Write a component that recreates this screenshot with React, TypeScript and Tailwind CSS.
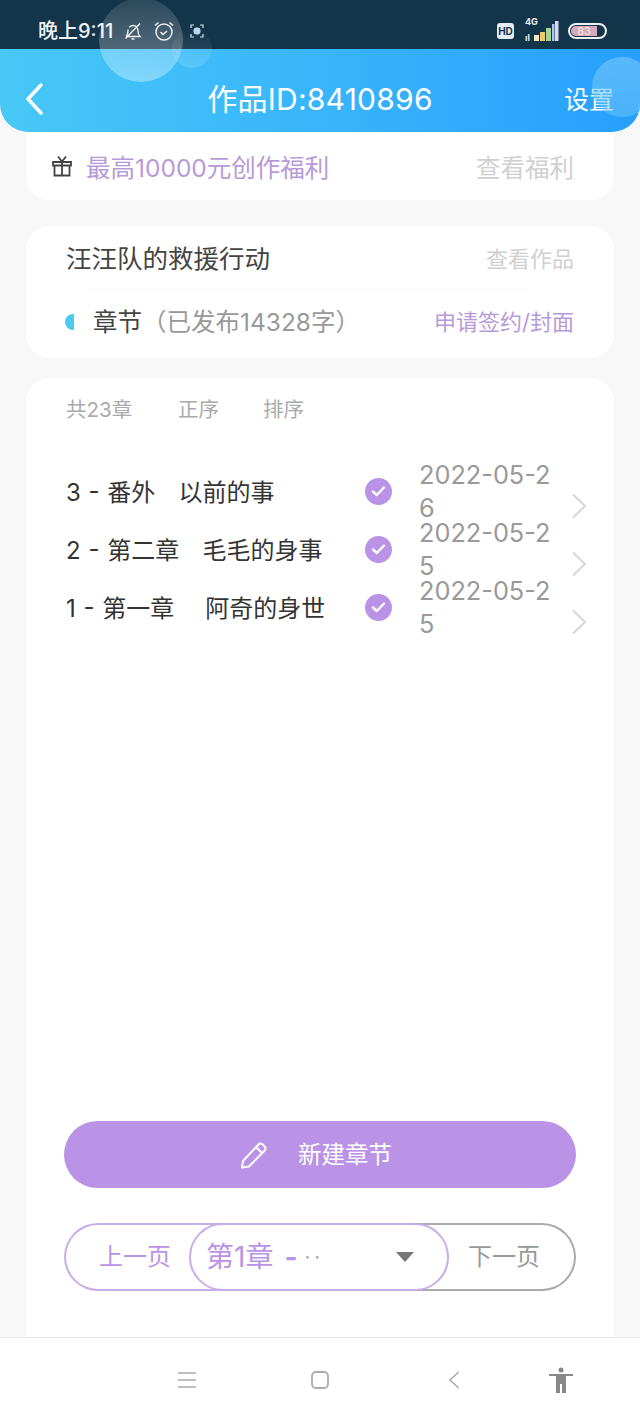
import React from 'react';

const chapters = [
  { title: '3 - 番外   以前的事', date: '2022-05-26' },
  { title: '2 - 第二章   毛毛的身事', date: '2022-05-25' },
  { title: '1 - 第一章    阿奇的身世', date: '2022-05-25' },
];

const StatusIcons = () => (
  <div className="flex items-center gap-[10px] ml-[10px]">
    <svg width="20" height="20" viewBox="0 0 20 20" fill="none" stroke="#e8eef2" strokeWidth="1.4">
      <path d="M3 15.500h14c-1.600-1.600-2-3-2-5.500 0-3-2-5.500-5-5.500-1.500 0-2.800.7-3.700 1.800M5.200 8.500C5 9 5 9.500 5 10c0 2.500-.4 3.900-2 5.500M8.500 18h3M2.500 17.500 17 2.500" />
    </svg>
    <svg width="22" height="22" viewBox="0 0 22 22" fill="none" stroke="#e8eef2" strokeWidth="1.500">
      <circle cx="11" cy="12" r="8" />
      <path d="M7.500 12l2.500 2.500 4-3.500M2 5.500 5.500 2.500M20 5.500l-3.500-3" />
    </svg>
    <svg width="14" height="14" viewBox="0 0 14 14" fill="none" className="ml-[5px]">
      <rect x="3.500" y="3.500" width="7" height="7" rx="3" fill="#b9d6ec" />
      <path d="M1 4V1h3M10 1h3v3M13 10v3h-3M4 13H1v-3" stroke="#d7e4ec" strokeWidth="1.200" />
    </svg>
  </div>
);

const SignalIcon = () => (
  <div className="relative w-[34px] h-[26px] mr-[9px] ml-[11px]">
    <span className="absolute left-0 top-[-1px] text-[9px] leading-[10px] font-bold text-[#e8eef2]">4G</span>
    <span className="absolute left-0 bottom-[1px] text-[9px] leading-[10px] font-bold text-[#e8eef2]">ıl</span>
    <svg width="34" height="20" viewBox="0 0 34 20" className="absolute left-0 top-[3px]">
      <rect x="9" y="14" width="5" height="6" fill="#f2e6c8" />
      <rect x="15" y="11" width="5" height="9" fill="#ecc96b" />
      <rect x="21" y="7" width="5" height="13" fill="#a5d596" />
      <rect x="27" y="3" width="2.500" height="17" fill="#a9c6ee" />
      <rect x="30" y="0" width="3.500" height="20" fill="#d6d9ef" />
    </svg>
  </div>
);

const App: React.FC = () => {
  return (
    <div className="relative w-[640px] h-[1422px] overflow-hidden flex flex-col bg-[#f8f8f8] font-['Inter','Noto_Sans_CJK_SC',sans-serif]">
      {/* status bar */}
      <div className="h-[49px] shrink-0 bg-[#14344a] flex items-center pt-[12px] pl-[38px] pr-[33px] text-[#eef2f5]">
        <span className="text-[20px] leading-[24px] font-medium">晚上9:11</span>
        <StatusIcons />
        <div className="ml-auto flex items-center">
          <span className="w-[17px] h-[16px] rounded-[3px] bg-[#e6eef5] text-[#14344a] text-[10px] leading-[16px] font-bold text-center">HD</span>
          <SignalIcon />
          <div className="w-[39px] h-[16px] rounded-full border-2 border-[#eef2f5] p-[1px] flex">
            <span className="w-[26px] h-full rounded-l-full bg-[#d6a9bd] text-[11px] leading-[10px] text-center text-[#f3ead8]">83</span>
          </div>
        </div>
      </div>

      {/* header */}
      <header className="relative z-10 h-[83px] shrink-0 rounded-b-[28px] bg-gradient-to-r from-[#47c8f6] via-[#38b5fb] to-[#279ffd] flex items-center justify-center text-white">
        <svg width="20" height="32" viewBox="0 0 20 32" fill="none" stroke="#fff" strokeWidth="3.500" strokeLinecap="round" strokeLinejoin="round" className="absolute left-[25px] top-[34px]">
          <path d="M16 2 3 16l13 14" />
        </svg>
        <span className="text-[30px] leading-[40px] tracking-[0.25px] mt-[17px]">作品ID:8410896</span>
        <span className="absolute right-[26px] top-[31px] text-[25px] leading-[40px]">设置</span>
      </header>

      {/* bubbles */}
      <div className="absolute z-20 left-[99px] top-[-2px] w-[84px] h-[84px] rounded-full bg-gradient-to-b from-white/10 to-white/35" />
      <div className="absolute z-20 left-[172px] top-[28px] w-[40px] h-[40px] rounded-full bg-gradient-to-b from-white/0 to-white/15" />
      <div className="absolute z-20 left-[592px] top-[57px] w-[60px] h-[60px] rounded-full bg-gradient-to-b from-[#6cc4f8]/70 to-[#6cc4f8]/50" />

      {/* welfare card */}
      <section className="mx-[26px] h-[68px] shrink-0 bg-white rounded-b-[24px] flex items-center pl-[26px] pr-[40px]">
        <svg width="20" height="22" viewBox="0 0 20 22" fill="none" stroke="#444" strokeWidth="1.800" className="mr-[14px] shrink-0">
          <path d="M1 7h18v3.500H1zM2.500 10.500V20.500h15V10.500M10 7v13.500M6 1.500 10 6.500 14 1.500" />
        </svg>
        <span className="text-[24.5px] leading-[32px] mt-[3px] text-[#b79ad8]">最高10000元创作福利</span>
        <span className="ml-auto text-[24.5px] leading-[32px] mt-[3px] text-[#d0d0d0]">查看福利</span>
      </section>

      {/* work card */}
      <section className="mx-[26px] mt-[26px] h-[132px] shrink-0 bg-white rounded-[24px] pl-[40px] pr-[40px] flex flex-col">
        <div className="h-[63px] shrink-0 flex items-center justify-between pt-[3px]">
          <span className="text-[25.500px] leading-[34px] text-[#444]">汪汪队的救援行动</span>
          <span className="text-[22px] leading-[30px] text-[#d0d0d0]">查看作品</span>
        </div>
        <div className="h-px w-[442px] ml-[22px] shrink-0 bg-[#f6f6f6]" />
        <div className="flex-1 flex items-center pb-[5px]">
          <span className="w-[9px] h-[16px] rounded-l-full bg-[#4ccbf0] -ml-[1px]" />
          <span className="ml-[19px] text-[24.500px] leading-[32px] text-[#444]">章节</span>
          <span className="text-[24.500px] leading-[32px] text-[#999]">（已发布14328字）</span>
          <span className="ml-auto text-[22px] leading-[30px] text-[#b79ad8]">申请签约/封面</span>
        </div>
      </section>

      {/* chapters card */}
      <section className="mx-[26px] mt-[20px] flex-1 bg-white rounded-t-[24px] pl-[40px] pr-[26px] pb-[46px] flex flex-col">
        <div className="flex pt-[18px] text-[20.500px] leading-[28px] text-[#aaa]">
          <span className="w-[112px]">共23章</span>
          <span className="w-[85px]">正序</span>
          <span>排序</span>
        </div>
        <ul className="mt-[38px] flex flex-col">
          {chapters.map((c) => (
            <li key={c.title} className="h-[58px] flex items-center">
              <span className="w-[299px] shrink-0 mt-[3px] text-[24px] leading-[30px] text-[#333] whitespace-pre [word-spacing:1px]">{c.title}</span>
              <span className="w-[27px] h-[27px] shrink-0 rounded-full bg-[#bb93e6] flex items-center justify-center">
                <svg width="15" height="12" viewBox="0 0 15 12" fill="none" stroke="#fff" strokeWidth="2.400" strokeLinecap="round" strokeLinejoin="round">
                  <path d="M2 6.500 5.800 10 13 2.500" />
                </svg>
              </span>
              <span className="ml-[27px] w-[142px] shrink-0 break-all text-[25.300px] leading-[33px] text-[#999]">{c.date}</span>
              <svg width="16" height="26" viewBox="0 0 16 26" fill="none" stroke="#d6d6d6" strokeWidth="2" className="ml-[10px] mt-[30px] shrink-0">
                <path d="M2 1.500 14 13 2 24.500" />
              </svg>
            </li>
          ))}
        </ul>

        <button className="mt-auto -ml-[2px] w-[512px] h-[67px] rounded-full bg-[#bb93e6] flex items-center justify-center text-white text-[23.500px]">
          <svg width="28" height="28" viewBox="0 0 28 28" fill="none" stroke="#fff" strokeWidth="2" strokeLinejoin="round" className="mr-[30px] ml-[-8px]">
            <path d="M2 26.500 3 20 18.500 3.500c1.200-1.200 2.800-1.200 4.200 0l2 2c1.200 1.200 1.200 2.800 0 4L9 25.500zM16 6l6.500 6.500" />
          </svg>
          新建章节
        </button>

        <div className="mt-[35px] -ml-[2px] w-[512px] h-[68px] flex items-stretch">
          <div className="w-[160px] shrink-0 rounded-l-full border-2 border-r-0 border-[#c9ade9] pl-[33px] flex items-center text-[24px] text-[#bb93e6]">上一页</div>
          <div className="relative z-10 -ml-[35px] w-[260px] shrink-0 rounded-full border-2 border-[#c9ade9] bg-white pl-[15px] pr-[33px] flex items-center">
            <span className="text-[28px] text-[#bb93e6]">第1章</span>
            <span className="ml-[11px] text-[28px] font-bold text-[#bb93e6]">-</span>
            <span className="ml-[7px] text-[20px] tracking-[4px] text-[#aaa]">··</span>
            <span className="ml-auto w-0 h-0 border-x-[9px] border-x-transparent border-t-[10px] border-t-[#777]" />
          </div>
          <div className="flex-1 -ml-[35px] rounded-r-full border-2 border-l-0 border-[#aaa] pl-[54px] flex items-center text-[24px] text-[#999]">下一页</div>
        </div>
      </section>

      {/* navigation bar */}
      <nav className="relative h-[85px] shrink-0 bg-white border-t border-[#e6e6e6] flex items-center pb-[1px] pl-[178px]">
        <svg width="18" height="18" viewBox="0 0 18 18" stroke="#aaa" strokeWidth="1.600">
          <path d="M0 2h18M0 9h18M0 16h18" />
        </svg>
        <svg width="18" height="18" viewBox="0 0 18 18" fill="none" stroke="#aaa" strokeWidth="1.800" className="ml-[115px]">
          <rect x="1" y="1" width="16" height="16" rx="4" />
        </svg>
        <svg width="12" height="18" viewBox="0 0 12 18" fill="none" stroke="#aaa" strokeWidth="1.500" className="ml-[119px]">
          <path d="M10.500 1 2 9l8.500 8" />
        </svg>
        <svg width="24" height="26" viewBox="0 0 24 26" fill="#888" className="ml-[89px]">
          <circle cx="12" cy="3" r="2.500" />
          <path d="M0 7h24v2h-7v17h-4v-9h-2v9H7V9H0z" />
        </svg>
      </nav>
    </div>
  );
};

export default App;
